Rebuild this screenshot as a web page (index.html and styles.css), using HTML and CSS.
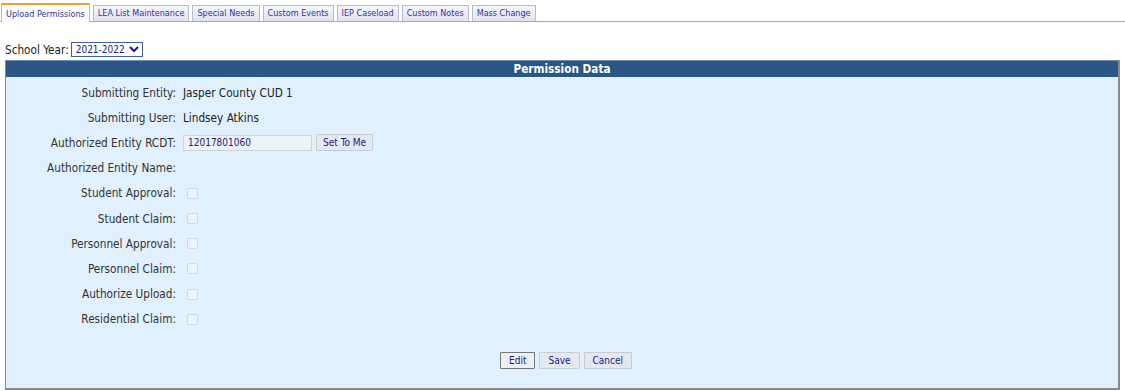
FILE: index.html
```html
<!DOCTYPE html>
<html lang="en">
<head>
    <meta charset="UTF-8">
    <title>Upload Permissions</title>
    <link rel="stylesheet" href="styles.css">
</head>
<body>
    <ul class="tabs">
        <li class="on">Upload Permissions</li>
        <li>LEA List Maintenance</li>
        <li>Special Needs</li>
        <li>Custom Events</li>
        <li>IEP Caseload</li>
        <li>Custom Notes</li>
        <li>Mass Change</li>
    </ul>
    <div class="year">
        School Year:<select class="yearsel"><option>2021-2022</option></select>
    </div>
    <div class="panel">
        <div class="panel-head">Permission Data</div>
        <div class="panel-body">
            <div class="row"><label>Submitting Entity:</label><span>Jasper County CUD 1</span></div>
            <div class="row"><label>Submitting User:</label><span>Lindsey Atkins</span></div>
            <div class="row"><label>Authorized Entity RCDT:</label><span class="rcdt"><input class="txt" type="text" value="12017801060" disabled><button class="btn">Set To Me</button></span></div>
            <div class="row"><label>Authorized Entity Name:</label><span></span></div>
            <div class="row"><label>Student Approval:</label><span><i class="chk"></i></span></div>
            <div class="row"><label>Student Claim:</label><span><i class="chk"></i></span></div>
            <div class="row"><label>Personnel Approval:</label><span><i class="chk"></i></span></div>
            <div class="row"><label>Personnel Claim:</label><span><i class="chk"></i></span></div>
            <div class="row"><label>Authorize Upload:</label><span><i class="chk"></i></span></div>
            <div class="row"><label>Residential Claim:</label><span><i class="chk"></i></span></div>
            <div class="actions">
                <button class="btn edit">Edit</button>
                <button class="btn">Save</button>
                <button class="btn">Cancel</button>
            </div>
        </div>
    </div>
</body>
</html>
```

FILE: styles.css
```css
body,ul,li{
    padding: 0;
    margin: 0;
    list-style: none;
}
body{
    font-family: "DejaVu Sans Condensed", "DejaVu Sans", sans-serif;
    font-size: 11.7px;
    color: #222;
    background: #fff;
    padding: 0 5px;
}
.tabs{
    display: flex;
    padding-top: 5px;
    margin: 0 -5px;
    padding-left: 1px;
    border-bottom: 1px solid #a9a9a9;
    height: 16px;
}
.tabs li{
    height: 15px;
    line-height: 15px;
    padding: 0 4px;
    margin-right: 3px;
    font-size: 9px;
    color: #3131a8;
    border: 1px solid #b9bccb;
    border-bottom: none;
    background: linear-gradient(#f6f7fb, #dfe2ee);
}
.tabs li.on{
    background: #fff;
    border-top: 2px solid #f0a030;
    margin-top: -2px;
    height: 17px;
    line-height: 18px;
}
.year{
    margin-top: 19px;
    height: 17px;
    display: flex;
    align-items: center;
}
.yearsel{
    font-family: inherit;
    font-size: 10px;
    color: #1a1a8a;
    height: 15px;
    width: auto;
    padding: 0;
    margin-left: 2px;
    border: 1px solid #3d5fa8;
    border-radius: 0;
    background: #fff;
}
.panel{
    margin-top: 2px;
    border: 1px solid #8a8a8a;
    border-top: none;
    border-right-width: 2px;
    border-bottom-width: 2px;
}
.panel-head{
    background: #2a5785;
    color: #fff;
    font-weight: bold;
    text-align: center;
    height: 16px;
    line-height: 17px;
    border-top: 1px solid #6e8fb3;
}
.panel-body{
    background: #e1f0fd;
    padding-top: 3px;
    height: 308px;
}
.row{
    display: flex;
    align-items: center;
    height: 25.2px;
}
.row label{
    width: 170px;
    text-align: right;
    padding-right: 7px;
    color: #333;
}
.row span{
    display: flex;
    align-items: center;
    color: #222;
}
.txt{
    width: 129px;
    height: 16px;
    padding: 0 4px;
    box-sizing: border-box;
    font-family: inherit;
    font-size: 10px;
    color: #1a1a8a;
    background: #eef1f5;
    border: 1px solid #cfd3da;
}
.btn{
    font-family: inherit;
    font-size: 10px;
    color: #1a1a8a;
    background: #e4e9ef;
    border: 1px solid #c9ced6;
    height: 17px;
    padding: 0 6px;
    margin-left: 4px;
    border-radius: 1px;
}
.chk{
    display: block;
    width: 9px;
    height: 9px;
    margin-left: 4px;
    border: 1px solid #cfd6df;
    border-radius: 2px;
    background: #eef3f8;
}
.actions{
    display: flex;
    justify-content: center;
    margin-top: 20px;
    padding-left: 8px;
}
.actions .btn{
    margin: 0 2px;
    padding: 0 8px;
}
.actions .edit{
    border-color: #777;
    background: #eceff3;
}
```
